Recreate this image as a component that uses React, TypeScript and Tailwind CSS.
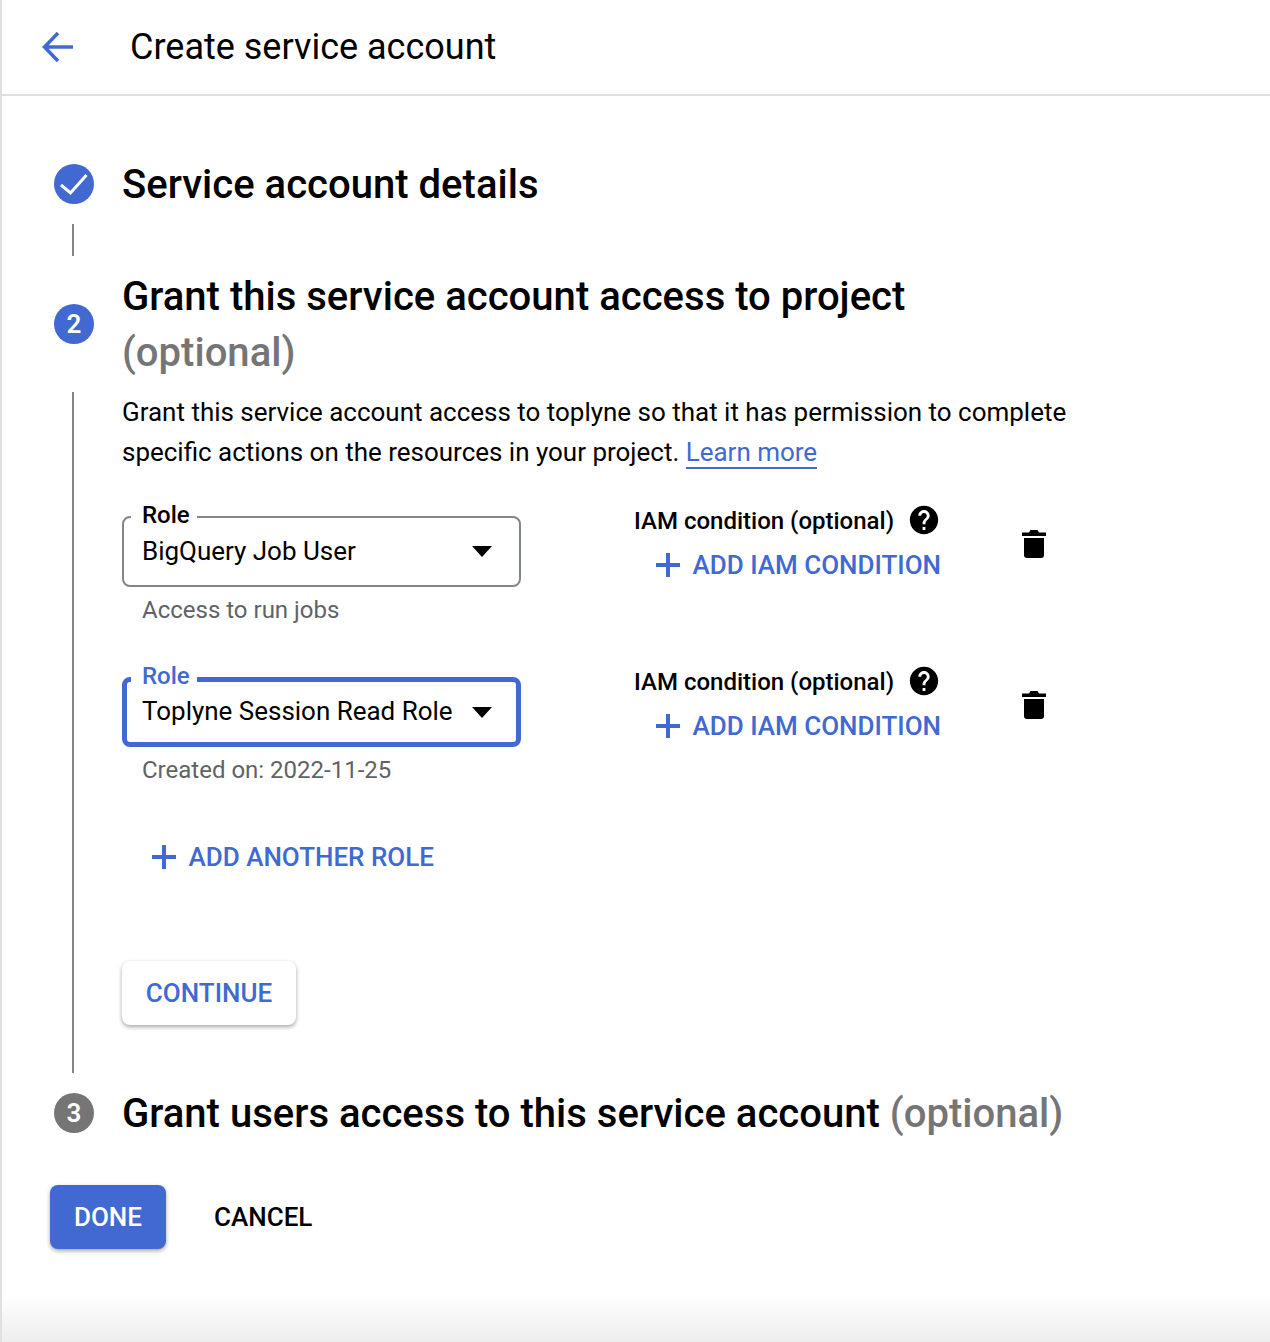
const BLUE = '#4169d1';

const Plus = () => (
  <svg width="24" height="24" viewBox="0 0 24 24" className="shrink-0" fill={BLUE}>
    <path d="M10 0h4v10h10v4H14v10h-4V14H0v-4h10z" />
  </svg>
);

const Trash = () => (
  <svg width="24" height="28" viewBox="0 0 24 28" fill="#000">
    <path d="M0 2.500h7L8.500 0h7L17 2.500h7V6H0z" />
    <path d="M2 8h20v17a3 3 0 0 1-3 3H5a3 3 0 0 1-3-3z" />
  </svg>
);

const Help = () => (
  <svg width="34" height="34" viewBox="0 0 24 24" fill="#000" className="-mt-[2px]">
    <path d="M12 2C6.48 2 2 6.48 2 12s4.48 10 10 10 10-4.48 10-10S17.52 2 12 2zm1 17h-2v-2h2v2zm2.07-7.75l-.9.92C13.45 12.9 13 13.5 13 15h-2v-.5c0-1.1.45-2.1 1.17-2.83l1.24-1.26c.37-.36.59-.86.59-1.41 0-1.1-.9-2-2-2s-2 .9-2 2H8c0-2.21 1.79-4 4-4s4 1.79 4 4c0 .88-.36 1.68-.93 2.25z" />
  </svg>
);

const Caret = () => (
  <svg width="20" height="11" viewBox="0 0 20 11" fill="#000">
    <path d="M0 0h20L10 11z" />
  </svg>
);

const RoleRow = ({ value, helper, focused }: { value: string; helper: string; focused?: boolean }) => (
  <div className="flex items-start">
    <div className="w-[399px] shrink-0">
      <div
        className={
          focused
            ? 'relative flex h-[70px] items-center justify-between rounded-lg border-[5px] border-[#4169d1] pl-[15px] pr-[24px]'
            : 'relative flex h-[71px] items-center justify-between rounded-lg border-2 border-[#80868b] pl-[18px] pr-[27px]'
        }
      >
        <span
          className={
            focused
              ? 'absolute -top-[20px] left-[4px] bg-white pl-[11px] pr-[7px] text-[24px] leading-[28px] font-medium text-[#4169d1]'
              : 'absolute -top-[17px] left-[7px] bg-white pl-[11px] pr-[7px] text-[24px] leading-[28px] font-medium text-black'
          }
        >
          Role
        </span>
        <span className="pb-[2px] text-[25.97px] leading-[36px] text-black">{value}</span>
        <Caret />
      </div>
      <div className="mt-[5px] pl-[20px] text-[24px] leading-[36px] text-[#5f6368]">{helper}</div>
    </div>
    <div className="ml-[113px] w-[388px] shrink-0">
      <div className="-mt-[12px] flex h-[34px] items-center gap-[13px]">
        <span className="text-[24px] leading-[34px] font-medium text-black">IAM condition (optional)</span>
        <Help />
      </div>
      <div className="mt-[11px] flex h-[32px] items-center gap-[12.5px] pl-[22px]">
        <Plus />
        <span className="text-[26px] leading-[32px] font-medium text-[#4169d1]">ADD IAM CONDITION</span>
      </div>
    </div>
    <div className="mt-[14px]">
      <Trash />
    </div>
  </div>
);

export default function App() {
  return (
    <div className="relative h-[1342px] w-[1270px] overflow-hidden border-l-2 border-[#e0e0e0] bg-white font-['Roboto',sans-serif]">
      <header className="flex h-[96px] items-center border-b-2 border-[#e0e0e0]">
        <svg width="32" height="32" viewBox="0 0 32 32" fill="none" stroke={BLUE} strokeWidth="3.500" className="ml-[40px]">
          <path d="M31 16H3M16 2 2.500 16 16 30" />
        </svg>
        <h1 className="ml-[56px] text-[36px] leading-[44px] font-normal text-black">Create service account</h1>
      </header>

      <main className="pl-[52px] pt-[60px]">
        {/* Step 1 */}
        <div className="flex items-center gap-[28px]">
          <div className="flex h-[40px] w-[40px] items-center justify-center rounded-full bg-[#4169d1]">
            <svg width="40" height="40" viewBox="0 0 40 40" fill="none" stroke="#fff" strokeWidth="3">
              <path d="M7 21l9.500 8L32.500 11" />
            </svg>
          </div>
          <h2 className="-mb-[1px] pt-[1px] text-[40.05px] leading-[56px] font-medium text-black">Service account details</h2>
        </div>
        <div className="ml-[18px] mt-[12px] h-[32px] w-[2px] bg-[#80868b]" />

        {/* Step 2 */}
        <div className="mt-[12px] flex items-center gap-[28px]">
          <div className="flex h-[40px] w-[40px] shrink-0 items-center justify-center rounded-full bg-[#4169d1] text-[26px] font-semibold text-white">
            2
          </div>
          <h2 className="-mb-[1px] w-[900px] pt-[1px] text-[40.05px] leading-[56px] font-medium text-black">
            Grant this service account access to project <span className="text-[#757575]">(optional)</span>
          </h2>
        </div>
        <div className="mt-[12px] flex">
          <div className="ml-[18px] w-[2px] shrink-0 bg-[#80868b]" />
          <div className="ml-[48px] h-[681px] w-[1000px]">
            <p className="text-[25.97px] leading-[40px] text-black">
              Grant this service account access to toplyne so that it has permission to complete
              <br />
              specific actions on the resources in your project.{' '}
              <span className="border-b-2 border-[#4169d1] text-[#4169d1]">Learn more</span>
            </p>
            <div className="mt-[44px]">
              <RoleRow value="BigQuery Job User" helper="Access to run jobs" />
            </div>
            <div className="mt-[49px]">
              <RoleRow value="Toplyne Session Read Role" helper="Created on: 2022-11-25" focused />
            </div>
            <div className="mt-[53px] flex h-[32px] items-center gap-[12.5px] pl-[30px]">
              <Plus />
              <span className="text-[26px] leading-[32px] font-medium text-[#4169d1]">ADD ANOTHER ROLE</span>
            </div>
            <button className="mt-[88px] h-[64px] w-[174px] rounded-lg bg-white text-[26px] font-medium text-[#4169d1] shadow-[0_2px_4px_rgba(0,0,0,0.35)]">
              CONTINUE
            </button>
          </div>
        </div>

        {/* Step 3 */}
        <div className="mt-[12px] flex items-center gap-[28px]">
          <div className="flex h-[40px] w-[40px] items-center justify-center rounded-full bg-[#757575] text-[26px] font-semibold text-white">
            3
          </div>
          <h2 className="-mb-[1px] pt-[1px] text-[40.05px] leading-[56px] font-medium text-black">
            Grant users access to this service account <span className="text-[#757575]">(optional)</span>
          </h2>
        </div>

        <div className="-ml-[4px] mt-[44px] flex items-center gap-[48px]">
          <button className="h-[64px] w-[116px] rounded-lg bg-[#4169d1] text-[26px] font-medium text-white shadow-[0_2px_4px_rgba(0,0,0,0.35)]">
            DONE
          </button>
          <button className="text-[26px] font-medium text-black">CANCEL</button>
        </div>
      </main>

      <div className="absolute bottom-0 left-0 right-0 h-[48px] bg-gradient-to-b from-white to-[#ededed]" />
    </div>
  );
}
